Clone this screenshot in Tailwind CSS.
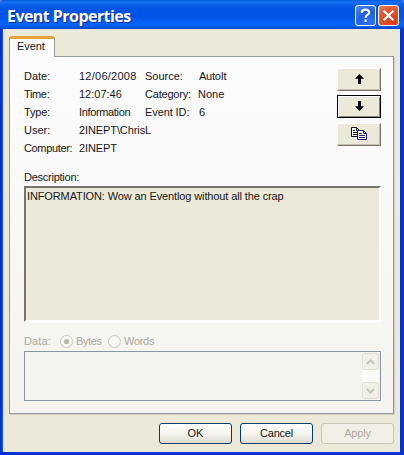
<!DOCTYPE html>
<html lang="en">
<head>
<meta charset="utf-8">
<title>Event Properties</title>
<script src="https://cdn.jsdelivr.net/npm/@tailwindcss/browser@4"></script>
</head>
<body class="w-[404px] h-[455px] overflow-hidden bg-[#4f7fd8]">
<div class="w-[404px] h-[455px] flex flex-col rounded-t-[5px] overflow-hidden bg-[#0831d9] text-[11px] leading-[13px] text-[#161616] font-['Liberation_Sans',Arial,sans-serif] whitespace-nowrap">
  <header class="h-[29px] shrink-0 flex items-center pl-[7px] pr-[5px] bg-[linear-gradient(to_bottom,#0058d8_0px,#1674f4_2px,#0860e8_5px,#0055e5_9px,#0055e8_17px,#0663fb_23px,#0560f5_26px,#0043c4_29px)]">
    <h1 class="flex-1 pt-[3px] text-[16px] leading-[20px] font-bold tracking-[-0.55px] text-white font-['Open_Sans','Noto_Sans',sans-serif] [text-shadow:1px_1px_#0a2a90]">Event Properties</h1>
    <div class="flex gap-[2px] pt-[2px]">
      <button class="size-[21px] rounded-[3px] border border-white bg-[radial-gradient(circle_at_75%_85%,#2872f8,#2460df_50%,#5687eb)] grid place-items-center" aria-label="Help">
        <svg width="19" height="19" viewBox="0 0 19 19" fill="none" stroke="white" stroke-width="2.1"><path d="M5.8 7V6.2C6 3.8 8 3.6 9.6 3.6C11.8 3.6 13.1 4.7 13.1 6.4C13.1 8.8 9.6 8.8 9.6 11.8"/><path d="M9.6 13.5V15.9"/></svg>
      </button>
      <button class="size-[21px] rounded-[3px] border border-white bg-[radial-gradient(circle_at_75%_85%,#dd4010,#df4e29_50%,#eb8060)] grid place-items-center" aria-label="Close">
        <svg width="19" height="19" viewBox="0 0 19 19" fill="none" stroke="white" stroke-width="2.3"><path d="M4.7 4.7L14.3 14.3M14.3 4.7L4.7 14.3"/></svg>
      </button>
    </div>
  </header>
  <main class="flex-1 ml-[3px] mr-[4px] mb-[3px] pl-[6px] pr-[6px] pt-[7px] bg-[#ece9d8] flex flex-col [box-shadow:-1px_0_#1654e8,1px_0_#0630c0]">
    <div class="relative z-10 w-[46px] h-[21px] shrink-0 rounded-t-[3px] border-x border-[#919b9c] border-t-[3px] border-t-[#e9a33c] bg-[#fdfdfe] pl-[7px] pt-[1px] tracking-[-0.1px]">Event</div>
    <section class="-mt-px h-[358px] w-[385px] shrink-0 border border-[#919b9c] bg-linear-to-b from-[#fcfcfe] to-[#f4f3ee] pl-[14px] pr-[12px] pt-[12px] flex flex-col [box-shadow:1px_1px_#d0cdbd]">
      <div class="flex h-[102px]">
        <dl class="grid grid-cols-[55px_66px_53px_auto] auto-rows-[18px] content-start pt-[1px]">
          <dt>Date:</dt><dd class="tracking-[0.25px]">12/06/2008</dd><dt>Source:</dt><dd class="pl-px tracking-[-0.25px]">AutoIt</dd>
          <dt class="tracking-[-0.35px]">Time:</dt><dd>12:07:46</dd><dt class="tracking-[-0.2px]">Category:</dt><dd>None</dd>
          <dt class="tracking-[-0.2px]">Type:</dt><dd class="tracking-[-0.35px]">Information</dd><dt class="tracking-[-0.1px]">Event ID:</dt><dd class="pl-px">6</dd>
          <dt>User:</dt><dd class="tracking-[-0.1px] col-span-3">2INEPT\ChrisL</dd>
          <dt class="tracking-[-0.35px]">Computer:</dt><dd class="tracking-[-0.1px] col-span-3">2INEPT</dd>
        </dl>
        <div class="ml-auto -mt-px flex flex-col">
          <button class="w-[44px] h-[23px] bg-[#ece9d8] border border-t-white border-l-white border-r-[#77756b] border-b-[#77756b] grid place-items-center [box-shadow:inset_-1px_-1px_#c5c1ae]" aria-label="Previous event">
            <svg class="-translate-y-px" width="9" height="10" viewBox="0 0 9 10"><path d="M4.5 0L9 4.8H6V10H3V4.8H0Z" fill="black"/></svg>
          </button>
          <button class="mt-[4px] w-[44px] h-[23px] bg-[#ece9d8] border border-black grid place-items-center [box-shadow:inset_1px_1px_white,inset_-1px_-1px_#88867a]" aria-label="Next event">
            <svg class="-translate-y-px" width="9" height="10" viewBox="0 0 9 10"><path d="M4.5 10L9 5.2H6V0H3V5.2H0Z" fill="black"/></svg>
          </button>
          <button class="mt-[5px] w-[44px] h-[23px] bg-[#ece9d8] border border-t-white border-l-white border-r-[#77756b] border-b-[#77756b] grid place-items-center [box-shadow:inset_-1px_-1px_#c5c1ae]" aria-label="Copy">
            <svg class="-translate-y-px" width="16" height="13" viewBox="0 0 16 13" fill="white"><path d="M.5 .5H5.5L8.5 3.5V9.5H.5Z" stroke="#101020"/><path d="M5.5 .5V3.5H8.5M2 3.5H4M2 5.5H6M2 7.5H6" fill="none" stroke="#101020"/><path d="M6.5 3.5H12.5L15.5 6.5V12.5H6.5Z" stroke="#1a1a80"/><path d="M12.5 3.5V6.5H15.5M8 6.5H11M8 8.5H14M8 10.5H14" fill="none" stroke="#1a1a80"/></svg>
          </button>
        </div>
      </div>
      <div class="h-[15px] tracking-[-0.25px]">Description:</div>
      <div class="h-[136px] w-[357px] border-2 border-t-[#77756b] border-l-[#77756b] border-r-white border-b-white bg-[#ece9d8] pl-px pt-[2px] tracking-[-0.12px]">INFORMATION: Wow an Eventlog without all the crap</div>
      <div class="mt-[11px] h-[17px] flex items-center text-[#aca899]">
        <span class="w-[36px] tracking-[0.1px]">Data:</span>
        <svg width="13" height="13" viewBox="0 0 13 13"><circle cx="6.5" cy="6.5" r="6" fill="#f8f7f3" stroke="#cac8bb"/><circle cx="6.5" cy="6.5" r="2.6" fill="#b8b6a9"/></svg>
        <span class="w-[35px] pl-[3px] tracking-[-0.4px]">Bytes</span>
        <svg width="13" height="13" viewBox="0 0 13 13"><circle cx="6.5" cy="6.5" r="6" fill="#f8f7f3" stroke="#cac8bb"/></svg>
        <span class="pl-[3px] tracking-[-0.3px]">Words</span>
      </div>
      <div class="mt-px h-[50px] w-[357px] shrink-0 border border-[#8798a3] bg-[#f5f3ee] flex justify-end p-px">
        <div class="w-[17px] flex flex-col justify-between bg-[#fafaf6]">
          <div class="size-[17px] rounded-[2px] border border-[#e2e0d5] bg-[#f0efe8] grid place-items-center"><svg width="9" height="6" viewBox="0 0 9 6" fill="none" stroke="#c5c3b7" stroke-width="2"><path d="M.8 5L4.5 1.4L8.2 5"/></svg></div>
          <div class="size-[17px] rounded-[2px] border border-[#e2e0d5] bg-[#f0efe8] grid place-items-center"><svg width="9" height="6" viewBox="0 0 9 6" fill="none" stroke="#c5c3b7" stroke-width="2"><path d="M.8 1L4.5 4.6L8.2 1"/></svg></div>
        </div>
      </div>
    </section>
    <footer class="mt-[9px] flex justify-end gap-[8px]">
      <button class="w-[73px] h-[21px] rounded-[3px] border border-[#003c74] bg-linear-to-b from-white via-[#f6f5f0] to-[#dedbd0]">OK</button>
      <button class="w-[73px] h-[21px] rounded-[3px] border border-[#003c74] bg-linear-to-b from-white via-[#f6f5f0] to-[#dedbd0] tracking-[-0.2px]">Cancel</button>
      <button class="w-[73px] h-[21px] rounded-[3px] border border-[#c9c7ba] bg-[#f2f0e6] text-[#aca899] tracking-[-0.2px]">Apply</button>
    </footer>
  </main>
</div>
</body>
</html>
